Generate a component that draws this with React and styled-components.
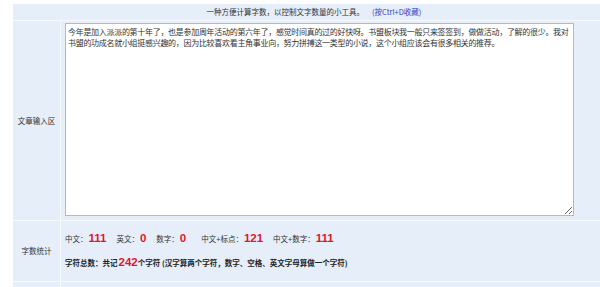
import React from 'react';
import styled, { createGlobalStyle } from 'styled-components';

const GlobalStyle = createGlobalStyle`
  html, body {
    margin: 0;
    padding: 0;
    background: #fff;
    overflow: hidden;
  }
  body {
    font-family: "Noto Sans CJK SC", "Liberation Sans", sans-serif;
    color: #333;
  }
`;

const Page = styled.div`
  padding: 4px 0 0 13px;
  width: 600px;
  height: 287px;
  box-sizing: border-box;
  overflow: hidden;
`;

const Table = styled.div`
  display: grid;
  grid-template-columns: 47px 554px;
  grid-template-rows: 16px 199px 60px 20px;
  gap: 1px;
  background: #f6f9fd;
`;

const Cell = styled.div`
  background: #e5eef9;
  display: flex;
  align-items: center;
  justify-content: ${p => (p.center ? 'center' : 'flex-start')};
  grid-column: ${p => (p.span ? '1 / span 2' : 'auto')};
  font-size: 7.5px;
  line-height: 1;
`;

const Label = styled(Cell)`
  justify-content: center;
  font-size: 7.5px;
`;

const Link = styled.span`
  color: #3b3bc4;
  margin-left: 8px;
`;

const EditorCell = styled(Cell)`
  align-items: flex-start;
  padding: 2px 0 0 4px;
`;

const TextBox = styled.textarea`
  width: 509px;
  height: 193px;
  box-sizing: border-box;
  border: 1px solid #a4bbe0;
  padding: 2px 2px;
  margin: 0;
  font-family: "Noto Sans CJK SC", sans-serif;
  font-size: 8px;
  letter-spacing: -0.3px;
  line-height: 11px;
  color: #333;
  background: #fff;
  outline: none;
`;

const StatsCell = styled(Cell)`
  flex-direction: column;
  align-items: flex-start;
  justify-content: flex-start;
  padding: 12px 0 0 4px;
  gap: 13px;
`;

const StatLine = styled.div`
  display: flex;
  align-items: center;
  gap: 10px;
  font-size: 7.5px;
  height: 11px;
`;

const Stat = styled.span`
  display: inline-flex;
  align-items: center;
  margin-right: ${p => (p.wide ? '5px' : '0')};
`;

const Num = styled.b`
  color: #e0162b;
  font-family: "Liberation Sans", Arial, sans-serif;
  font-size: 11.5px;
  font-weight: bold;
  margin-left: 1px;
`;

const Total = styled.div`
  font-weight: bold;
  font-size: 7.5px;
  color: #222;
  display: flex;
  align-items: center;
  height: 11px;
`;

const text =
  '今年是加入派派的第十年了，也是参加周年活动的第六年了，感觉时间真的过的好快呀。书盟板块我一般只来签签到，做做活动，了解的很少。我对书盟的功成名就小组挺感兴趣的，因为比较喜欢看主角事业向，努力拼搏这一类型的小说，这个小组应该会有很多相关的推荐。';

const stats = [
  { label: '中文：', value: 111 },
  { label: '英文：', value: 0 },
  { label: '数字：', value: 0, wide: true },
  { label: '中文+标点：', value: 121 },
  { label: '中文+数字：', value: 111 },
];

export default function App() {
  return (
    <Page>
      <GlobalStyle />
      <Table>
        <Cell span center>
          一种方便计算字数，以控制文字数量的小工具。
          <Link>(按Ctrl+D收藏)</Link>
        </Cell>

        <Label>文章输入区</Label>
        <EditorCell>
          <TextBox defaultValue={text} spellCheck={false} />
        </EditorCell>

        <Label>字数统计</Label>
        <StatsCell>
          <StatLine>
            {stats.map(s => (
              <Stat key={s.label} wide={s.wide ? 1 : 0}>
                {s.label}
                <Num>{s.value}</Num>
              </Stat>
            ))}
          </StatLine>
          <Total>
            字符总数：共记<Num>242</Num>个字符 (汉字算两个字符，数字、空格、英文字母算做一个字符)
          </Total>
        </StatsCell>

        <Cell />
        <Cell />
      </Table>
    </Page>
  );
}
